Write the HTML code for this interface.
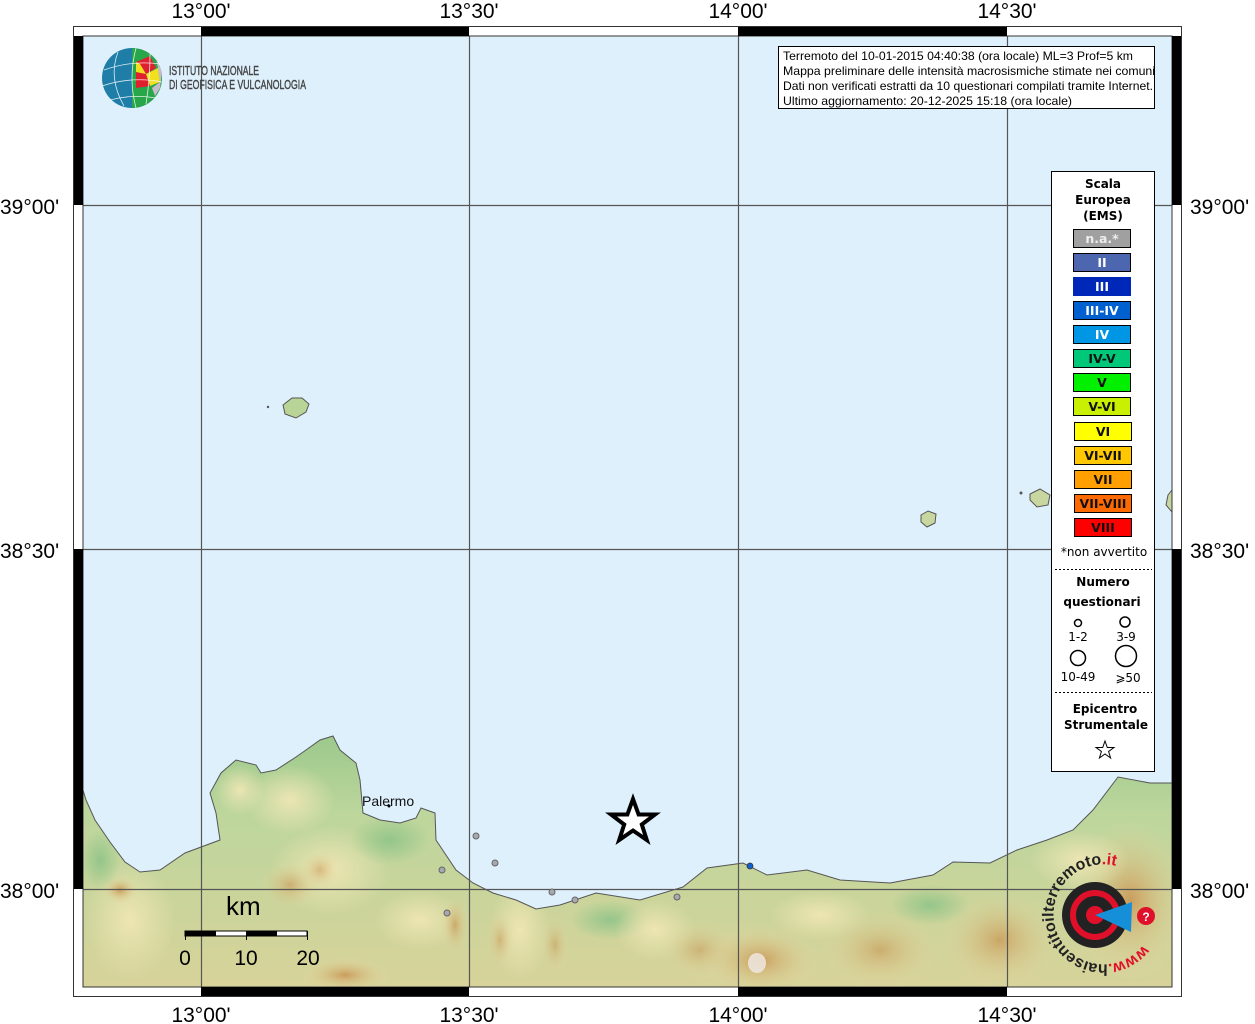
<!DOCTYPE html>
<html><head><meta charset="utf-8"><style>
html,body{margin:0;padding:0;background:#fff;}
svg{display:block;}
text{font-family:"Liberation Sans",sans-serif;}
.dv{font-family:"DejaVu Sans","Liberation Sans",sans-serif;}
</style></head><body>
<svg width="1255" height="1024" viewBox="0 0 1255 1024" xmlns="http://www.w3.org/2000/svg">
<defs>
<linearGradient id="land" x1="0" y1="0" x2="0" y2="1">
<stop offset="0" stop-color="#9cc98c"/>
<stop offset="0.3" stop-color="#bcd69c"/>
<stop offset="1" stop-color="#d8d39a"/>
</linearGradient>
<radialGradient id="tan" cx="0.5" cy="0.5" r="0.5">
<stop offset="0" stop-color="#c99a58" stop-opacity="0.95"/>
<stop offset="1" stop-color="#e6dca6" stop-opacity="0"/>
</radialGradient>
<radialGradient id="cream" cx="0.5" cy="0.5" r="0.5">
<stop offset="0" stop-color="#efe6b4" stop-opacity="0.95"/>
<stop offset="1" stop-color="#efe6b4" stop-opacity="0"/>
</radialGradient>
<radialGradient id="grn" cx="0.5" cy="0.5" r="0.5">
<stop offset="0" stop-color="#8fc488" stop-opacity="0.9"/>
<stop offset="1" stop-color="#8fc488" stop-opacity="0"/>
</radialGradient>
<clipPath id="mapclip"><rect x="83" y="36" width="1089" height="951"/></clipPath>
<clipPath id="landclip"><path d="M83,790 L86,800 L95,820 L110,842 L125,862 L140,872 L160,870 L185,853 L220,840 L216,813 L210,793 L221,773 L236,760 L256,765 L261,773 L276,770 L296,757 L306,750 L320,740 L333,736 L340,750 L356,763 L360,780 L363,813 L380,820 L400,823 L416,818 L421,808 L435,813 L436,840 L456,870 L473,883 L493,893 L516,900 L536,909 L560,905 L596,893 L640,900 L683,887 L707,868 L743,863 L767,875 L807,870 L840,880 L890,883 L933,875 L953,862 L990,863 L1017,850 L1047,840 L1073,830 L1093,810 L1118,777 L1150,783 L1172,783 L1172,990 L83,990 Z"/></clipPath>
</defs>
<rect x="83" y="36" width="1089" height="951" fill="#dff0fd"/>
<g clip-path="url(#mapclip)">
<path d="M83,790 L86,800 L95,820 L110,842 L125,862 L140,872 L160,870 L185,853 L220,840 L216,813 L210,793 L221,773 L236,760 L256,765 L261,773 L276,770 L296,757 L306,750 L320,740 L333,736 L340,750 L356,763 L360,780 L363,813 L380,820 L400,823 L416,818 L421,808 L435,813 L436,840 L456,870 L473,883 L493,893 L516,900 L536,909 L560,905 L596,893 L640,900 L683,887 L707,868 L743,863 L767,875 L807,870 L840,880 L890,883 L933,875 L953,862 L990,863 L1017,850 L1047,840 L1073,830 L1093,810 L1118,777 L1150,783 L1172,783 L1172,990 L83,990 Z" fill="url(#land)"/>
<g clip-path="url(#landclip)">
<ellipse cx="290" cy="800" rx="45" ry="35" fill="url(#cream)"/>
<ellipse cx="240" cy="790" rx="25" ry="25" fill="url(#cream)"/>
<ellipse cx="330" cy="870" rx="60" ry="45" fill="url(#cream)"/>
<ellipse cx="290" cy="885" rx="30" ry="25" fill="url(#tan)" opacity="0.7"/>
<ellipse cx="320" cy="870" rx="20" ry="20" fill="url(#tan)" opacity="0.6"/>
<ellipse cx="345" cy="975" rx="45" ry="18" fill="url(#tan)"/>
<ellipse cx="420" cy="920" rx="45" ry="30" fill="url(#cream)"/>
<ellipse cx="455" cy="925" rx="14" ry="30" fill="url(#tan)" opacity="0.8"/>
<ellipse cx="520" cy="930" rx="30" ry="50" fill="url(#cream)"/>
<ellipse cx="500" cy="940" rx="14" ry="30" fill="url(#tan)" opacity="0.6"/>
<ellipse cx="555" cy="945" rx="14" ry="30" fill="url(#tan)" opacity="0.6"/>
<ellipse cx="610" cy="920" rx="40" ry="20" fill="url(#grn)"/>
<ellipse cx="655" cy="930" rx="40" ry="30" fill="url(#cream)"/>
<ellipse cx="700" cy="950" rx="40" ry="30" fill="url(#tan)" opacity="0.6"/>
<ellipse cx="760" cy="960" rx="60" ry="35" fill="url(#tan)"/>
<ellipse cx="757" cy="963" rx="9" ry="10" fill="#efe8e0" opacity="0.85"/>
<ellipse cx="820" cy="915" rx="50" ry="25" fill="url(#cream)"/>
<ellipse cx="880" cy="950" rx="60" ry="40" fill="url(#tan)" opacity="0.7"/>
<ellipse cx="930" cy="905" rx="40" ry="20" fill="url(#grn)"/>
<ellipse cx="1000" cy="940" rx="60" ry="50" fill="url(#tan)" opacity="0.85"/>
<ellipse cx="1130" cy="900" rx="60" ry="80" fill="url(#tan)"/>
<ellipse cx="1080" cy="860" rx="50" ry="30" fill="url(#cream)"/>
<ellipse cx="130" cy="920" rx="45" ry="60" fill="url(#cream)"/>
<ellipse cx="120" cy="890" rx="18" ry="14" fill="url(#tan)"/>
<ellipse cx="100" cy="860" rx="20" ry="30" fill="url(#grn)"/>
<ellipse cx="390" cy="840" rx="40" ry="25" fill="url(#grn)"/>
</g>
<path d="M83,790 L86,800 L95,820 L110,842 L125,862 L140,872 L160,870 L185,853 L220,840 L216,813 L210,793 L221,773 L236,760 L256,765 L261,773 L276,770 L296,757 L306,750 L320,740 L333,736 L340,750 L356,763 L360,780 L363,813 L380,820 L400,823 L416,818 L421,808 L435,813 L436,840 L456,870 L473,883 L493,893 L516,900 L536,909 L560,905 L596,893 L640,900 L683,887 L707,868 L743,863 L767,875 L807,870 L840,880 L890,883 L933,875 L953,862 L990,863 L1017,850 L1047,840 L1073,830 L1093,810 L1118,777 L1150,783 L1172,783" fill="none" stroke="#555" stroke-width="1"/>
<path d="M283,405 L292,398 L302,398 L309,404 L306,412 L296,418 L285,414 Z" fill="#b9d497" stroke="#555" stroke-width="1"/>
<circle cx="268" cy="407" r="1.2" fill="#555"/>
<path d="M921,515 L928,511 L936,514 L935,523 L927,527 L921,522 Z" fill="#c8d7a0" stroke="#555" stroke-width="1"/>
<path d="M1030,494 L1040,489 L1050,495 L1048,505 L1037,507 L1030,500 Z" fill="#c8d7a0" stroke="#555" stroke-width="1"/>
<path d="M1168,495 L1172,490 L1172,512 L1166,505 Z" fill="#c8d7a0" stroke="#555" stroke-width="1"/>
<circle cx="1021" cy="493" r="1.5" fill="#555"/>
</g>
<g stroke="#555" stroke-width="1.2">
<line x1="201.5" y1="36" x2="201.5" y2="987"/>
<line x1="469.5" y1="36" x2="469.5" y2="987"/>
<line x1="738.5" y1="36" x2="738.5" y2="987"/>
<line x1="1007.5" y1="36" x2="1007.5" y2="987"/>
<line x1="83" y1="205.5" x2="1172" y2="205.5"/>
<line x1="83" y1="549.5" x2="1172" y2="549.5"/>
<line x1="83" y1="889.5" x2="1172" y2="889.5"/>
</g>
<rect x="73.5" y="26.5" width="1108" height="970" fill="none" stroke="#333" stroke-width="1"/>
<rect x="83" y="36" width="1089" height="951" fill="none" stroke="#333" stroke-width="1"/>
<g fill="#000">
<rect x="201" y="27" width="268" height="9"/>
<rect x="738" y="27" width="269" height="9"/>
<rect x="201" y="987" width="268" height="9"/>
<rect x="738" y="987" width="269" height="9"/>
<rect x="74" y="36" width="9" height="169"/>
<rect x="74" y="549" width="9" height="340"/>
<rect x="1172" y="36" width="9" height="169"/>
<rect x="1172" y="549" width="9" height="340"/>
</g>
<g font-size="21" fill="#000" text-anchor="middle">
<text x="201" y="18">13°00'</text>
<text x="469" y="18">13°30'</text>
<text x="738" y="18">14°00'</text>
<text x="1007" y="18">14°30'</text>
<text x="201" y="1022">13°00'</text>
<text x="469" y="1022">13°30'</text>
<text x="738" y="1022">14°00'</text>
<text x="1007" y="1022">14°30'</text>
</g>
<g font-size="21" fill="#000">
<text x="0" y="214">39°00'</text>
<text x="0" y="558">38°30'</text>
<text x="0" y="898">38°00'</text>
<text x="1190" y="214">39°00'</text>
<text x="1190" y="558">38°30'</text>
<text x="1190" y="898">38°00'</text>
</g>
<g>
<circle cx="132" cy="78" r="30" fill="#1e7ea8"/>
<path d="M132,48 A30,30 0 0 1 162,78 A30,30 0 0 1 132,108 Z" fill="#27a64a"/>
<path d="M136,62 L150,56 L156,68 L146,74 L136,72 Z" fill="#e0202e"/>
<path d="M136,72 L146,74 L150,86 L136,88 Z" fill="#e0202e"/>
<path d="M146,74 L158,68 L160,82 L150,86 Z" fill="#f0e020"/>
<path d="M136,62 L136,72 L146,74 L140,64 Z" fill="#f0e020"/>
<path d="M156,58 L162,72 L160,88 L155,96 L152,88 L160,82 L158,68 Z" fill="#c8bccc"/>
<g stroke="#fff" stroke-width="0.8" fill="none" opacity="0.85">
<path d="M104,70 Q132,60 160,64"/><path d="M102,86 Q132,76 162,82"/><path d="M110,100 Q132,94 156,98"/>
<path d="M118,52 Q108,78 124,106"/><path d="M136,48 Q128,78 136,108"/><path d="M150,54 Q150,80 146,104"/>
</g>
<text x="169" y="75" font-size="13" fill="#444" stroke="#444" stroke-width="0.4" textLength="90" lengthAdjust="spacingAndGlyphs">ISTITUTO NAZIONALE</text>
<text x="169" y="89" font-size="13" fill="#444" stroke="#444" stroke-width="0.4" textLength="137" lengthAdjust="spacingAndGlyphs">DI GEOFISICA E VULCANOLOGIA</text>
</g>
<rect x="778.5" y="46.5" width="376" height="62" fill="#fff" stroke="#000" stroke-width="1"/>
<g font-size="12" fill="#000">
<text x="783" y="60" textLength="350" lengthAdjust="spacingAndGlyphs">Terremoto del 10-01-2015 04:40:38 (ora locale) ML=3 Prof=5 km</text>
<text x="783" y="75" textLength="372" lengthAdjust="spacingAndGlyphs">Mappa preliminare delle intensità macrosismiche stimate nei comuni</text>
<text x="783" y="90" textLength="370" lengthAdjust="spacingAndGlyphs">Dati non verificati estratti da 10 questionari compilati tramite Internet.</text>
<text x="783" y="105" textLength="289" lengthAdjust="spacingAndGlyphs">Ultimo aggiornamento: 20-12-2025 15:18 (ora locale)</text>
</g>
<rect x="1051.5" y="171.5" width="103" height="600" fill="#fff" stroke="#000" stroke-width="1"/>
<g class="dv" font-size="12" font-weight="bold" text-anchor="middle" fill="#000">
<text x="1103" y="188" class="dv">Scala</text>
<text x="1103" y="204" class="dv">Europea</text>
<text x="1103" y="220" class="dv">(EMS)</text>
</g>
<g stroke="#000" stroke-width="1">
<rect x="1073.5" y="229.5" width="57" height="18" fill="#a0a0a0"/>
<rect x="1073.5" y="253.5" width="57" height="18" fill="#4d66b0"/>
<rect x="1073.5" y="277.5" width="57" height="18" fill="#0028b8" stroke="#0028b8"/>
<rect x="1073.5" y="301.5" width="57" height="18" fill="#0060d0"/>
<rect x="1073.5" y="325.5" width="57" height="18" fill="#0096e6"/>
<rect x="1073.5" y="349.5" width="57" height="18" fill="#00c878"/>
<rect x="1073.5" y="373.5" width="57" height="18" fill="#00f000"/>
<rect x="1073.5" y="397.5" width="57" height="18" fill="#c8f000"/>
<rect x="1074.5" y="422.5" width="57" height="18" fill="#ffff00"/>
<rect x="1074.5" y="446.5" width="57" height="18" fill="#ffc800"/>
<rect x="1074.5" y="470.5" width="57" height="18" fill="#ffa000"/>
<rect x="1074.5" y="494.5" width="57" height="18" fill="#ff6a00"/>
<rect x="1074.5" y="518.5" width="57" height="18" fill="#ff0000"/>
</g>
<g class="dv" font-size="12.5" font-weight="bold" text-anchor="middle">
<text x="1102" y="243" fill="#eee" class="dv">n.a.*</text>
<text x="1102" y="267" fill="#fff" class="dv">II</text>
<text x="1102" y="291" fill="#fff" class="dv">III</text>
<text x="1102" y="315" fill="#fff" class="dv">III-IV</text>
<text x="1102" y="339" fill="#fff" class="dv">IV</text>
<text x="1102" y="363" fill="#111" class="dv">IV-V</text>
<text x="1102" y="387" fill="#111" class="dv">V</text>
<text x="1102" y="411" fill="#111" class="dv">V-VI</text>
<text x="1103" y="436" fill="#111" class="dv">VI</text>
<text x="1103" y="460" fill="#111" class="dv">VI-VII</text>
<text x="1103" y="484" fill="#111" class="dv">VII</text>
<text x="1103" y="508" fill="#111" class="dv">VII-VIII</text>
<text x="1103" y="532" fill="#111" class="dv">VIII</text>
</g>
<text x="1104" y="556" font-size="12" text-anchor="middle" class="dv">*non avvertito</text>
<line x1="1055" y1="569.5" x2="1152" y2="569.5" stroke="#000" stroke-dasharray="2,2"/>
<g class="dv" font-size="12" font-weight="bold" text-anchor="middle">
<text x="1103" y="586" class="dv">Numero</text>
<text x="1102" y="606" class="dv">questionari</text>
</g>
<g fill="none" stroke="#000" stroke-width="1.5">
<circle cx="1078" cy="623" r="3.5"/>
<circle cx="1125" cy="622" r="5"/>
<circle cx="1078" cy="658" r="7.5"/>
<circle cx="1126" cy="656" r="10.5"/>
</g>
<g class="dv" font-size="12" text-anchor="middle">
<text x="1078" y="641" class="dv">1-2</text>
<text x="1126" y="641" class="dv">3-9</text>
<text x="1078" y="681" class="dv">10-49</text>
<text x="1128" y="682" class="dv">⩾50</text>
</g>
<line x1="1055" y1="692.5" x2="1152" y2="692.5" stroke="#000" stroke-dasharray="2,2"/>
<g class="dv" font-size="12" font-weight="bold" text-anchor="middle">
<text x="1105" y="713" class="dv">Epicentro</text>
<text x="1106" y="729" class="dv">Strumentale</text>
</g>
<path d="M1105,741 L1107.3,747.5 L1114,747.5 L1108.6,751.5 L1110.6,758 L1105,754 L1099.4,758 L1101.4,751.5 L1096,747.5 L1102.7,747.5 Z" fill="#fff" stroke="#000" stroke-width="1"/>
<path d="M633,799 L638.6,814.5 L655,814.5 L641.8,824.5 L646.8,840 L633,830.5 L619.2,840 L624.2,824.5 L611,814.5 L627.4,814.5 Z" fill="#fff" stroke="#000" stroke-width="4"/>
<g fill="#a8a8b0" stroke="#666" stroke-width="1">
<circle cx="476" cy="836" r="3"/><circle cx="495" cy="863" r="3"/><circle cx="442" cy="870" r="3"/>
<circle cx="447" cy="913" r="3"/><circle cx="552" cy="892" r="3"/><circle cx="575" cy="900" r="3"/>
<circle cx="677" cy="897" r="3"/>
</g>
<circle cx="750" cy="866" r="3" fill="#1060d0" stroke="#333" stroke-width="0.8"/>
<text x="362" y="806" font-size="14" fill="#111">Palermo</text>
<circle cx="389" cy="806" r="1.5" fill="#000"/>
<text x="226" y="915" font-size="26" fill="#000">km</text>
<rect x="185" y="931" width="122" height="5" fill="#fff" stroke="#000" stroke-width="1"/>
<rect x="185" y="931" width="31" height="5" fill="#000"/>
<rect x="246" y="931" width="31" height="5" fill="#000"/>
<g stroke="#000" stroke-width="1"><line x1="185.5" y1="931" x2="185.5" y2="940"/><line x1="246.5" y1="931" x2="246.5" y2="940"/><line x1="307.5" y1="931" x2="307.5" y2="940"/></g>
<g font-size="21" text-anchor="middle"><text x="185" y="965">0</text><text x="246" y="965">10</text><text x="308" y="965">20</text></g>
<g>
<circle cx="1095" cy="915" r="33" fill="#222"/>
<circle cx="1095" cy="915" r="22" fill="none" stroke="#e0102a" stroke-width="6"/>
<circle cx="1095" cy="915" r="9" fill="#e0102a"/>
<path d="M1095,915 L1132,902 L1131,932 Z" fill="#1590d8"/>
<circle cx="1146" cy="916" r="9" fill="#e0102a"/>
<text x="1146" y="921" font-size="12" fill="#fff" text-anchor="middle" font-weight="bold">?</text>
<path id="arc" d="M1143,945 A50,50 0 1 1 1144,885" fill="none"/>
<text font-size="16" fill="#222" font-weight="bold"><textPath href="#arc" startOffset="0"><tspan fill="#e0102a">www.</tspan>haisentitoilterremoto<tspan fill="#e0102a">.it</tspan></textPath></text>
</g>
</svg>
</body></html>
